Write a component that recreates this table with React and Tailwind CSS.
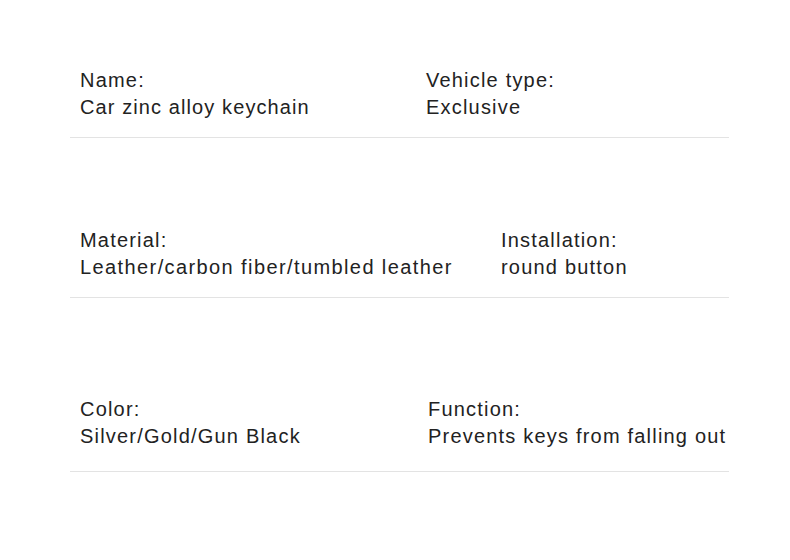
export default function App() {
  const rows = [
    { pt: "pt-[67px]", pb: "pb-[16px]", w: "w-[346px]", a: ["Name:", "Car zinc alloy keychain"], av: "tracking-[1.1px]", b: ["Vehicle type:", "Exclusive"] },
    { pt: "pt-[89px]", pb: "pb-[16px]", w: "w-[421px]", a: ["Material:", "Leather/carbon fiber/tumbled leather"], av: "tracking-[1.4px]", b: ["Installation:", "round button"] },
    { pt: "pt-[98px]", pb: "pb-[21px]", w: "w-[348px]", a: ["Color:", "Silver/Gold/Gun Black"], av: "tracking-[1.2px]", b: ["Function:", "Prevents keys from falling out"] },
  ];
  return (
    <div className="w-[790px] h-[560px] bg-white px-[70px] text-[20px] leading-[27px] tracking-[1.2px] text-[#222]" style={{ fontFamily: '"Liberation Sans", Arial, sans-serif' }}>
      {rows.map((r, i) => (
        <div key={i} className={`${r.pt} ${r.pb} border-b border-[#e3e3e3] flex w-[659px] pl-[10px]`}>
          <div className={`${r.w} shrink-0`}>
            <div>{r.a[0]}</div>
            <div className={`whitespace-nowrap ${r.av}`}>{r.a[1]}</div>
          </div>
          <div>
            <div>{r.b[0]}</div>
            <div className="whitespace-nowrap">{r.b[1]}</div>
          </div>
        </div>
      ))}
    </div>
  );
}
